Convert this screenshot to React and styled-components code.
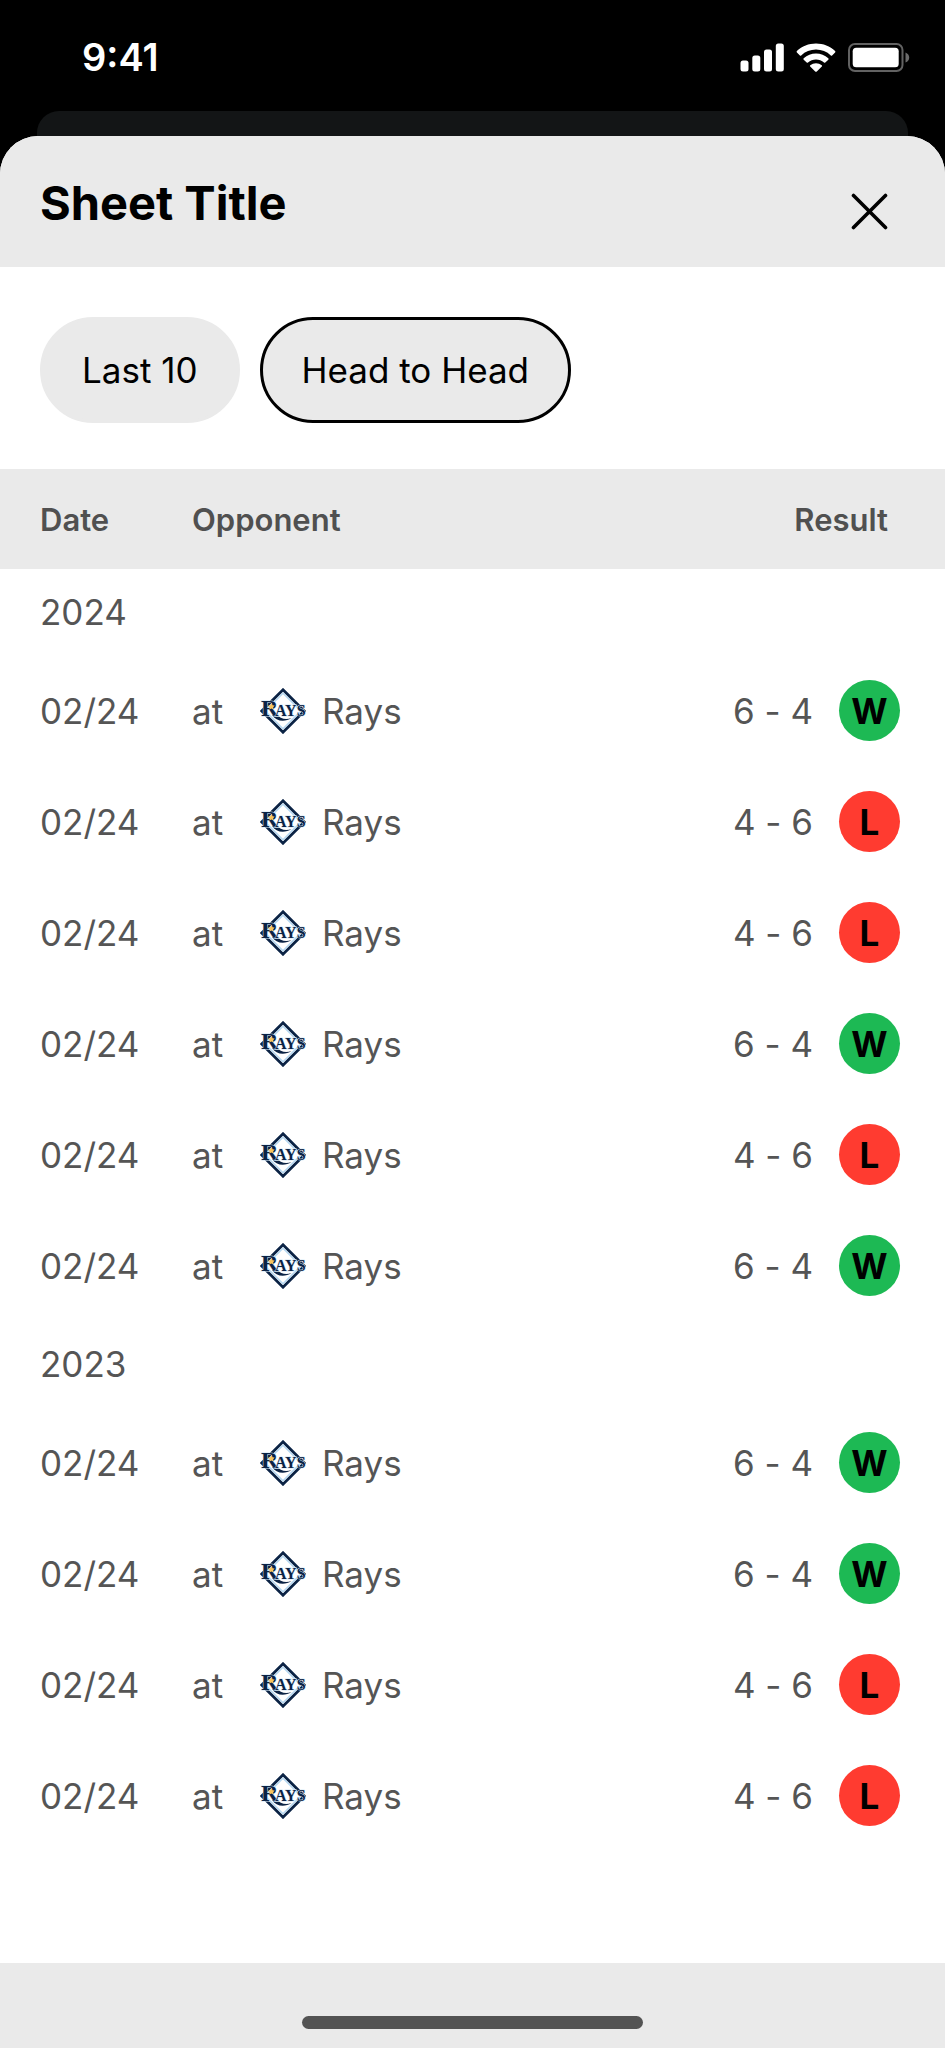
import React, { useState } from 'react';
import styled, { createGlobalStyle } from 'styled-components';

const seasons = [
  { year: '2024', games: ['W', 'L', 'L', 'W', 'L', 'W'] },
  { year: '2023', games: ['W', 'W', 'L', 'L'] },
];

const filters = ['Last 10', 'Head to Head'];

const SignalIcon = () => (
  <svg width="44" height="29" viewBox="0 0 44 29" fill="#fff" aria-hidden="true">
    <rect x="0.5" y="17.5" width="8" height="11" rx="2.5" />
    <rect x="12.3" y="12.5" width="8" height="16" rx="2.5" />
    <rect x="24" y="6.5" width="8" height="22" rx="2.5" />
    <rect x="35.8" y="0.5" width="8" height="28" rx="2.5" />
  </svg>
);

const WifiIcon = () => (
  <svg width="40" height="29" viewBox="0 0 40 29" fill="#fff" aria-hidden="true">
    <path d="M20 0.5C12.8 0.5 6 3.2 0.9 8.1Q0.2 8.8 0.9 9.5L3.9 12.4Q4.5 13 5.2 12.4C9.2 8.7 14.4 6.6 20 6.6S30.8 8.7 34.8 12.4Q35.5 13 36.1 12.4L39.1 9.5Q39.8 8.8 39.1 8.1C34 3.2 27.2 0.5 20 0.5Z" />
    <path d="M20 10.5C15.4 10.5 11.1 12.3 7.7 15.3Q7 16 7.7 16.7L10.7 19.5Q11.3 20.1 12 19.5C14.2 17.6 17 16.5 20 16.5S25.8 17.6 28 19.5Q28.7 20.1 29.3 19.5L32.3 16.7Q33 16 32.3 15.3C28.9 12.3 24.6 10.5 20 10.5Z" />
    <path d="M20 20.3C17.9 20.3 15.9 21 14.3 22.3Q13.6 22.9 14.2 23.5L19.2 28.4Q20 29.1 20.8 28.4L25.8 23.5Q26.4 22.9 25.7 22.3C24.1 21 22.1 20.3 20 20.3Z" />
  </svg>
);

const BatteryIcon = () => (
  <svg width="62" height="29" viewBox="0 0 62 29" aria-hidden="true">
    <rect x="1" y="1" width="53.5" height="27" rx="6" fill="none" stroke="#626262" strokeWidth="2" />
    <rect x="4.7" y="4.7" width="46" height="19.5" rx="3.5" fill="#fff" />
    <path d="M57.5 9.5Q61.2 11 61.2 14.5T57.5 19.5Z" fill="#6b6b6b" />
  </svg>
);

const CloseIcon = () => (
  <svg width="37" height="37" viewBox="0 0 37 37" stroke="#000" strokeWidth="3.6" strokeLinecap="round" aria-hidden="true">
    <path d="M2.5 2.5L34.5 34.5M34.5 2.5L2.5 34.5" />
  </svg>
);

const RaysLogo = () => (
  <svg width="46" height="46" viewBox="0 0 46 46" aria-hidden="true">
    <path d="M23 1.8L44.2 23L23 44.2L1.8 23Z" fill="#fff" stroke="#0b2345" strokeWidth="2.8" />
    <path d="M23 5.2L40.8 23L23 40.8L5.2 23Z" fill="none" stroke="#b5d8f2" strokeWidth="1.4" />
    <path d="M12 27C16 33.5 25 34.5 31.5 30C26 32 20 31 16.5 26Z" fill="#0b2345" />
    <LogoText x="1" y="28" fontSize="24">R</LogoText>
    <LogoText x="15" y="28" fontSize="16">AYS</LogoText>
    <path d="M11.4 15.2L12.5 17.2L14.7 17.6L13.2 19.2L13.5 21.4L11.4 20.5L9.4 21.4L9.7 19.2L8.2 17.6L10.4 17.2Z" fill="#f9c45c" />
  </svg>
);

const App = () => {
  const [active, setActive] = useState('Head to Head');

  return (
    <>
      <GlobalStyle />
      <Screen>
        <StatusBar>
          <time>9:41</time>
          <StatusIcons>
            <SignalIcon />
            <WifiIcon />
            <BatteryIcon />
          </StatusIcons>
        </StatusBar>
        <BackCard />
        <Sheet>
          <SheetHeader>
            <h1>Sheet Title</h1>
            <CloseButton type="button" aria-label="Close">
              <CloseIcon />
            </CloseButton>
          </SheetHeader>
          <Filters>
            {filters.map((name) => (
              <Chip
                key={name}
                type="button"
                $active={name === active}
                aria-pressed={name === active}
                onClick={() => setActive(name)}
              >
                {name}
              </Chip>
            ))}
          </Filters>
          <GameTable>
            <thead>
              <tr>
                <DateHead scope="col">Date</DateHead>
                <HeadCell scope="col">Opponent</HeadCell>
                <ResultHead scope="col">Result</ResultHead>
              </tr>
            </thead>
            {seasons.map(({ year, games }) => (
              <tbody key={year}>
                <tr>
                  <YearCell colSpan={3} scope="rowgroup">
                    {year}
                  </YearCell>
                </tr>
                {games.map((result, i) => (
                  <tr key={i}>
                    <DateCell>02/24</DateCell>
                    <Cell>
                      <Opponent>
                        <Venue>at</Venue>
                        <RaysLogo />
                        <span>Rays</span>
                      </Opponent>
                    </Cell>
                    <ResultCell>
                      <Result>
                        <Score>{result === 'W' ? '6 - 4' : '4 - 6'}</Score>
                        <Badge $win={result === 'W'}>{result}</Badge>
                      </Result>
                    </ResultCell>
                  </tr>
                ))}
              </tbody>
            ))}
          </GameTable>
          <BottomBar>
            <HomeIndicator />
          </BottomBar>
        </Sheet>
      </Screen>
    </>
  );
};

export default App;

const GlobalStyle = createGlobalStyle`
  * {
    box-sizing: border-box;
  }
  body {
    margin: 0;
    background: #000;
    font-family: Inter, 'Liberation Sans', sans-serif;
    font-size: 35px;
  }
  svg {
    display: block;
    flex-shrink: 0;
  }
`;

const Screen = styled.div`
  display: flex;
  flex-direction: column;
  min-height: 100vh;
`;

const StatusBar = styled.header`
  display: flex;
  align-items: center;
  justify-content: space-between;
  padding: 32px 35px 29px 82px;
  color: #fff;
  font-size: 38px;
  font-weight: 600;
  line-height: 50px;
`;

const StatusIcons = styled.div`
  display: flex;
  align-items: center;
  gap: 12px;
`;

const BackCard = styled.div`
  height: 25px;
  margin: 0 37px;
  border-radius: 22px 22px 0 0;
  background: #131516;
`;

const Sheet = styled.main`
  display: flex;
  flex-direction: column;
  flex: 1;
  overflow: hidden;
  border-radius: 38px 38px 0 0;
  background: #fff;
`;

const SheetHeader = styled.div`
  display: flex;
  align-items: flex-start;
  justify-content: space-between;
  padding: 40px 45px 21px 40px;
  background: #eaeaea;

  h1 {
    margin: 0;
    font-size: 47px;
    font-weight: 700;
    line-height: 54px;
  }
`;

const CloseButton = styled.button`
  display: flex;
  align-items: center;
  justify-content: center;
  width: 61px;
  height: 70px;
  padding: 0;
  border: none;
  background: none;
  cursor: pointer;
`;

const Filters = styled.div`
  display: flex;
  gap: 20px;
  padding: 50px 40px 46px;
`;

const Chip = styled.button`
  height: 106px;
  padding: 0 39px;
  border: 3px solid ${({ $active }) => ($active ? '#000' : '#eaeaea')};
  border-radius: 53px;
  background: #eaeaea;
  color: #000;
  font: inherit;
  white-space: nowrap;
  cursor: pointer;
`;

const GameTable = styled.table`
  width: 100%;
  border-collapse: collapse;
  color: #555;

  thead {
    background: #eaeaea;
  }
`;

const HeadCell = styled.th`
  height: 100px;
  padding: 0;
  color: #505050;
  font-size: 31px;
  font-weight: 600;
  text-align: left;
`;

const DateHead = styled(HeadCell)`
  width: 192px;
  padding-left: 40px;
`;

const ResultHead = styled(HeadCell)`
  padding-right: 57px;
  text-align: right;
`;

const YearCell = styled.th`
  height: 86px;
  padding: 0 40px;
  font-weight: 400;
  text-align: left;
`;

const Cell = styled.td`
  height: 111px;
  padding: 0;
`;

const DateCell = styled(Cell)`
  padding-left: 40px;
`;

const ResultCell = styled(Cell)`
  padding-right: 45px;
`;

const Opponent = styled.div`
  display: flex;
  align-items: center;
  gap: 16px;
`;

const Venue = styled.span`
  width: 52px;
`;

const Result = styled.div`
  display: flex;
  align-items: center;
  justify-content: flex-end;
  gap: 26px;
`;

// keeps the dash low instead of raised to digit height
const Score = styled.span`
  font-feature-settings: 'calt' 0;
`;

const Badge = styled.span`
  display: flex;
  align-items: center;
  justify-content: center;
  width: 61px;
  height: 61px;
  border-radius: 50%;
  background: ${({ $win }) => ($win ? '#1db954' : '#ff3b30')};
  color: #000;
  font-weight: 700;
`;

const LogoText = styled.text`
  fill: #0b2345;
  stroke: #d5e8f6;
  stroke-width: 1px;
  paint-order: stroke;
  font-family: 'Liberation Serif', serif;
  font-weight: 700;
`;

const BottomBar = styled.footer`
  display: flex;
  justify-content: center;
  margin-top: auto;
  padding: 53px 0 19px;
  background: #eaeaea;
`;

const HomeIndicator = styled.div`
  width: 36%;
  height: 13px;
  border-radius: 7px;
  background: #535353;
`;
